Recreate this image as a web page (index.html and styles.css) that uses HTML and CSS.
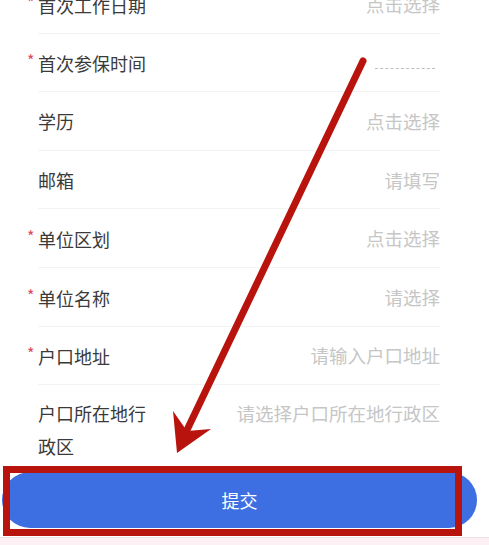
FILE: index.html
```html
<!DOCTYPE html>
<html lang="zh-CN">
<head>
  <meta charset="UTF-8" />
  <meta name="viewport" content="width=device-width, initial-scale=1.0"/>
  <title>参保登记</title>
  <link rel="stylesheet" href="styles.css">
</head>
<body>

  <!-- Form rows -->
  <div class="form-list">
    <div class="form-row">
      <span class="label"><span class="star">*</span>首次工作日期</span>
      <span class="value">点击选择</span>
    </div>
    <div class="form-row">
      <span class="label"><span class="star">*</span>首次参保时间</span>
      <span class="value value-clipped"></span>
    </div>
    <div class="form-row">
      <span class="label">学历</span>
      <span class="value">点击选择</span>
    </div>
    <div class="form-row">
      <span class="label">邮箱</span>
      <span class="value">请填写</span>
    </div>
    <div class="form-row">
      <span class="label"><span class="star">*</span>单位区划</span>
      <span class="value">点击选择</span>
    </div>
    <div class="form-row">
      <span class="label"><span class="star">*</span>单位名称</span>
      <span class="value">请选择</span>
    </div>
    <div class="form-row">
      <span class="label"><span class="star">*</span>户口地址</span>
      <span class="value">请输入户口地址</span>
    </div>
    <div class="form-row form-row-tall">
      <span class="label label-wrap">户口所在地行政区</span>
      <span class="value">请选择户口所在地行政区</span>
    </div>
  </div>

  <!-- Submit -->
  <div class="submit-bar">
    <button class="submit-btn">提交</button>
  </div>
  <div class="bottom-strip"></div>

  <!-- Annotation overlay -->
  <div class="mark-box"></div>
  <svg class="mark-arrow" width="489" height="545" viewBox="0 0 489 545">
    <line x1="363" y1="61" x2="187" y2="430" stroke="#b8140d" stroke-width="7" stroke-linecap="round"/>
    <polygon points="177,453 173,411 187,431 211,429" fill="#b8140d"/>
  </svg>

</body>
</html>
```

FILE: styles.css
```css
body {
  margin: 0;
  font-family: "Noto Sans CJK SC", "Noto Sans", sans-serif;
  background: #fff;
  color: #333;
  overflow: hidden;
  position: relative;
  height: 545px;
}
.form-list {
  margin: -25px 49px 0 38px;
}
.form-row {
  box-sizing: border-box;
  height: 58.6px;
  display: flex;
  align-items: center;
  justify-content: space-between;
  border-bottom: 1px solid #f3f3f3;
  font-size: 18px;
}
.form-row-tall {
  height: 80px;
  align-items: flex-start;
  padding-top: 12px;
  border-bottom: none;
  line-height: 33px;
}
.label {
  color: #3a3a3a;
  white-space: nowrap;
}
.label-wrap {
  white-space: normal;
  width: 112px;
}
.star {
  display: inline-block;
  width: 11px;
  margin-left: -11px;
  color: #d94a5e;
  font-size: 16px;
  vertical-align: 4px;
}
.value {
  color: #c6c6c6;
  font-size: 18.5px;
  white-space: nowrap;
}
.value-clipped {
  width: 60px;
  margin: 12px 5px 0 0;
  border-top: 1px dashed #bdbdbd;
}
.submit-bar {
  padding: 7px 12px 0 2px;
}
.submit-btn {
  display: block;
  width: 100%;
  height: 56px;
  border: none;
  border-radius: 28px;
  background: #3e6fe2;
  color: #fff;
  font-family: inherit;
  font-size: 18px;
}
.bottom-strip {
  margin-top: 9px;
  height: 10px;
  background: #fcf0f4;
  border-top: 1px solid #ecdfe4;
}
.mark-box {
  position: absolute;
  left: 3px;
  top: 466px;
  width: 445px;
  height: 56px;
  border: 7px solid #b8140d;
}
.mark-arrow {
  position: absolute;
  left: 0;
  top: 0;
  pointer-events: none;
}
```
